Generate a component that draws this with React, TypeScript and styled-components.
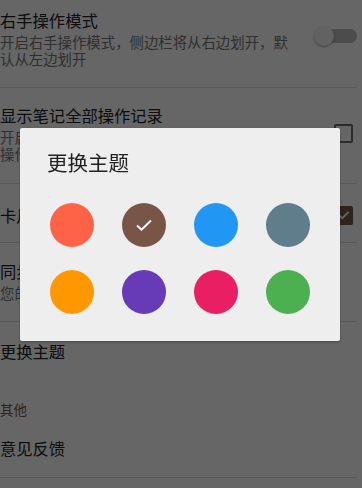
import styled, { createGlobalStyle } from "styled-components";
import { FC } from "react";

const themeColors = [
  "#FF6347",
  "#795548",
  "#2196F3",
  "#607D8B",
  "#FF9800",
  "#673AB7",
  "#E91E63",
  "#4CAF50",
];

const GlobalStyle = createGlobalStyle`
  html, body {
    margin: 0;
    padding: 0;
    background: #ffffff;
    overflow: hidden;
  }
  body {
    font-family: "Noto Sans CJK SC", "Noto Sans", sans-serif;
  }
`;

interface RowProps {
  top: number;
  bottom: number;
  divider?: boolean;
}

const App: FC = () => {
  return (
    <>
      <GlobalStyle />
      <Settings>
        <Row top={16} bottom={20} divider>
          <Text>
            <Title>右手操作模式</Title>
            <Summary>开启右手操作模式，侧边栏将从右边划开，默认从左边划开</Summary>
          </Text>
          <Control>
            <Switch>
              <Track />
              <Thumb />
            </Switch>
          </Control>
        </Row>
        <Row top={16} bottom={21} divider>
          <Text>
            <Title>显示笔记全部操作记录</Title>
            <Summary>开启后，将在笔记详情页中显示该笔记的全部操作记录</Summary>
          </Text>
          <Control>
            <CheckBox checked={false} />
          </Control>
        </Row>
        <Row top={20} bottom={16} divider>
          <Text>
            <Title>卡片模式</Title>
          </Text>
          <Control>
            <CheckBox checked>
              <svg width="14" height="14" viewBox="0 0 24 24">
                <path d="M4 12.5l5 5L20 6.5" fill="none" stroke="#ffffff" strokeWidth="3" />
              </svg>
            </CheckBox>
          </Control>
        </Row>
        <Row top={17} bottom={20} divider>
          <Text>
            <Title>同步笔记</Title>
            <Summary>您的笔记将自动同步到云端</Summary>
          </Text>
        </Row>
        <Row top={18} bottom={18}>
          <Text>
            <Title>更换主题</Title>
          </Text>
        </Row>
        <Category>其他</Category>
        <Row top={16} bottom={18} divider>
          <Text>
            <Title>意见反馈</Title>
          </Text>
        </Row>
      </Settings>

      <Scrim />
      <Dialog>
        <DialogTitle>更换主题</DialogTitle>
        <ColorGrid>
          {themeColors.map((color, i) => (
            <Cell key={color}>
              <Swatch color={color}>
                {i === 1 && (
                  <svg width="18" height="14" viewBox="0 0 18 14">
                    <path d="M2 7.5l4.5 4.2L16 2.5" fill="none" stroke="#ffffff" strokeWidth="2" />
                  </svg>
                )}
              </Swatch>
            </Cell>
          ))}
        </ColorGrid>
      </Dialog>
    </>
  );
};

const Settings = styled.div`
  margin-top: -7px;
  padding-right: 5px;
  color: #212121;
`;

const Row = styled.div<RowProps>`
  display: flex;
  align-items: center;
  padding: ${({ top, bottom }) => `${top}px 0 ${bottom}px 0`};
  border-bottom: ${({ divider }) => (divider ? "1px solid #e2e2e2" : "none")};
`;

const Text = styled.div`
  flex: 1;
  margin-right: 24px;
  display: flex;
  flex-direction: column;
  gap: 2px;
`;

const Title = styled.div`
  font-size: 16.3px;
  line-height: 22px;
  color: #212121;
`;

const Summary = styled.div`
  font-size: 14.4px;
  line-height: 17px;
  color: #757575;
`;

const Control = styled.div`
  width: 43px;
  display: flex;
  justify-content: flex-end;
`;

const Switch = styled.div`
  position: relative;
  width: 43px;
  height: 20px;
  margin-bottom: 5px;
`;

const Track = styled.div`
  position: absolute;
  right: 0;
  top: 3px;
  width: 36px;
  height: 14px;
  border-radius: 7px;
  background: #bdbdbd;
`;

const Thumb = styled.div`
  position: absolute;
  left: 0;
  top: 0;
  width: 20px;
  height: 20px;
  border-radius: 50%;
  background: #f5f5f5;
  box-shadow: 0 1px 2px rgba(0, 0, 0, 0.35);
`;

const CheckBox = styled.div<{ checked: boolean }>`
  box-sizing: border-box;
  width: 19px;
  height: 19px;
  margin-right: 4px;
  border-radius: 2px;
  border: ${({ checked }) => (checked ? "none" : "2px solid #6b6b6b")};
  background: ${({ checked }) => (checked ? "#795548" : "transparent")};
  display: flex;
  align-items: center;
  justify-content: center;
`;

const Category = styled.div`
  padding: 20px 0 3px 0;
  font-size: 13.5px;
  line-height: 18px;
  color: #795548;
`;

const Scrim = styled.div`
  position: fixed;
  inset: 0;
  background: rgba(0, 0, 0, 0.6);
`;

const Dialog = styled.div`
  position: fixed;
  left: 20px;
  top: 128px;
  width: 320px;
  box-sizing: border-box;
  padding: 20px 16px 27px 16px;
  background: #eeeeee;
  border-radius: 2px;
  box-shadow: 0 1px 3px rgba(0, 0, 0, 0.3);
`;

const DialogTitle = styled.div`
  padding-left: 11px;
  font-size: 20.5px;
  line-height: 28px;
  color: #212121;
  margin-bottom: 27px;
`;

const ColorGrid = styled.div`
  display: grid;
  grid-template-columns: repeat(4, 1fr);
  row-gap: 23px;
`;

const Cell = styled.div`
  display: flex;
  justify-content: center;
`;

const Swatch = styled.div<{ color: string }>`
  width: 44px;
  height: 44px;
  border-radius: 50%;
  background: ${({ color }) => color};
  display: flex;
  align-items: center;
  justify-content: center;
`;

export default App;
